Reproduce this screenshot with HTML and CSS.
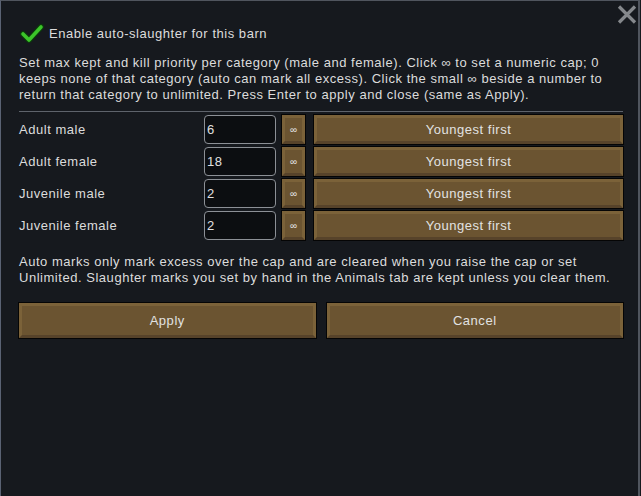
FILE: index.html
```html
<!DOCTYPE html>
<html lang="en">
<head>
    <meta charset="UTF-8">
    <meta name="viewport" content="width=device-width, initial-scale=1.0">
    <title>Auto-slaughter</title>
    <link rel="stylesheet" href="styles.css">
</head>
<body>
    <div class="dialog">
        <!-- Close -->
        <button class="close" aria-label="Close">
            <svg width="20" height="19" viewBox="0 0 20 19">
                <path d="M2 1.5 L18 17.5 M18 1.5 L2 17.5" stroke="#85888c" stroke-width="3.2" fill="none"/>
            </svg>
        </button>

        <label class="enable">
            <svg class="check" width="24" height="20" viewBox="0 0 24 20">
                <path d="M3 11 L9 17 L21 4" stroke="#0b3a0b" stroke-width="6" fill="none" stroke-linecap="round" stroke-linejoin="round"/>
                <path d="M3 11 L9 17 L21 4" stroke="#3cc52a" stroke-width="3.6" fill="none" stroke-linecap="round" stroke-linejoin="round"/>
            </svg>
            <span>Enable auto-slaughter for this barn</span>
        </label>

        <p class="intro">Set max kept and kill priority per category (male and female). Click &#8734; to set a numeric cap; 0 keeps none of that category (auto can mark all excess). Click the small &#8734; beside a number to return that category to unlimited. Press Enter to apply and close (same as Apply).</p>

        <hr class="rule">

        <div class="rows">
            <div class="row">
                <span class="label">Adult male</span>
                <input class="cap" type="text" value="6">
                <button class="btn inf">&#8734;</button>
                <button class="btn order">Youngest first</button>
            </div>
            <div class="row">
                <span class="label">Adult female</span>
                <input class="cap" type="text" value="18">
                <button class="btn inf">&#8734;</button>
                <button class="btn order">Youngest first</button>
            </div>
            <div class="row">
                <span class="label">Juvenile male</span>
                <input class="cap" type="text" value="2">
                <button class="btn inf">&#8734;</button>
                <button class="btn order">Youngest first</button>
            </div>
            <div class="row">
                <span class="label">Juvenile female</span>
                <input class="cap" type="text" value="2">
                <button class="btn inf">&#8734;</button>
                <button class="btn order">Youngest first</button>
            </div>
        </div>

        <p class="note">Auto marks only mark excess over the cap and are cleared when you raise the cap or set Unlimited. Slaughter marks you set by hand in the Animals tab are kept unless you clear them.</p>

        <div class="actions">
            <button class="btn big">Apply</button>
            <button class="btn big">Cancel</button>
        </div>
    </div>
</body>
</html>
```

FILE: styles.css
```css
html, body {
    margin: 0;
    height: 100%;
    background: #16191e;
}
body {
    font-family: "Liberation Sans", Arial, sans-serif;
    font-size: 13px;
    letter-spacing: 0.53px;
    color: #dcdcdc;
}
.dialog {
    position: relative;
    box-sizing: border-box;
    height: 496px;
    width: 640px;
    border-top: 1px solid #50555e;
    border-left: 1px solid #5a6273;
    border-right: 2px solid #50555e;
    padding: 0 15px 0 18px;
    background: #16191e;
}
.close {
    position: absolute;
    top: 4px;
    right: 1px;
    padding: 0;
    border: none;
    background: none;
    cursor: pointer;
}
.enable {
    display: flex;
    align-items: center;
    gap: 5px;
    margin-top: 22px;
}
.check {
    margin-left: 1px;
}
.intro, .note {
    margin: 0;
    line-height: 16px;
}
.intro {
    margin-top: 12px;
}
.rule {
    margin: 8px 0 3px;
    border: none;
    border-top: 1px solid #5e636b;
}
.rows {
    display: flex;
    flex-direction: column;
    gap: 3px;
}
.row {
    display: flex;
    align-items: center;
    height: 29px;
}
.label {
    width: 185px;
}
.cap {
    box-sizing: border-box;
    width: 72px;
    height: 29px;
    margin: 0 6px 0 0;
    padding: 0 2px;
    background: #0c0e11;
    border: 1px solid #8c9096;
    border-radius: 4px;
    color: #e0e0e0;
    font: inherit;
    letter-spacing: inherit;
}
.btn {
    box-sizing: border-box;
    height: 29px;
    padding: 0;
    background: #6b5431;
    border: 3px solid #7b6239;
    border-bottom-color: #57432a;
    box-shadow: 0 0 0 1px #050505;
    color: #e2e2e2;
    font: inherit;
    letter-spacing: inherit;
    cursor: pointer;
}
.btn:hover {
    background: #75603a;
}
.inf {
    width: 23px;
    margin-right: 9px;
    font-size: 10px;
    letter-spacing: 0;
}
.order {
    flex: 1;
}
.note {
    margin-top: 14px;
}
.actions {
    display: flex;
    gap: 11px;
    margin-top: 17px;
}
.big {
    flex: 1;
    height: 35px;
}
```
